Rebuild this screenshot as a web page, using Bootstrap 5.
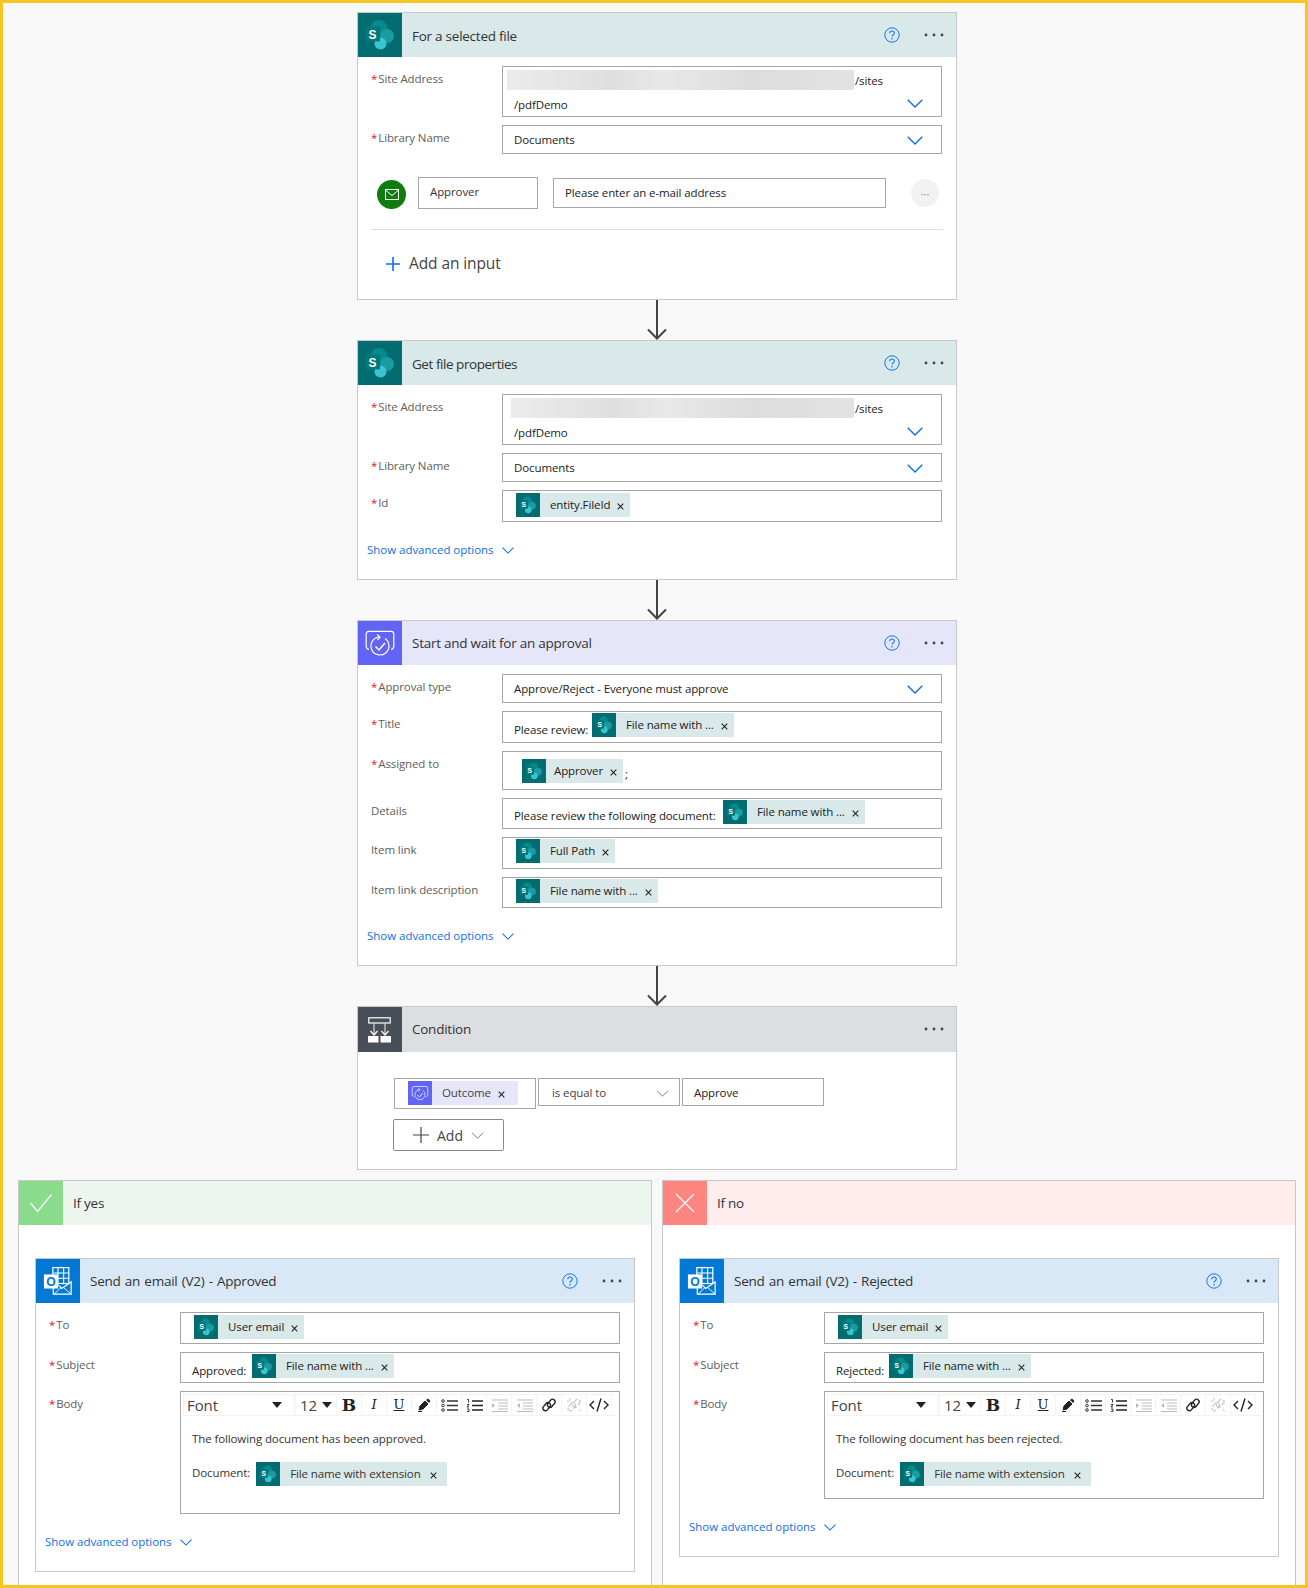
<!DOCTYPE html>
<html lang="en">
<head>
<meta charset="utf-8">
<title>Flow</title>
<link rel="stylesheet" href="https://cdn.jsdelivr.net/npm/bootstrap@5.3.0/dist/css/bootstrap.min.css">
<style>
html,body{margin:0;height:1588px;overflow:hidden}
body{font-family:"Open Sans","Liberation Sans",sans-serif;font-size:11.5px;letter-spacing:-.11px;color:#222;background:#f8f8f8}
.frame{height:1588px;border:3px solid #f5c523;overflow:hidden;padding-top:9px;display:flex;flex-direction:column}
.stack{width:600px;margin-left:354px}
.fcard{width:600px;background:#fff;border:1px solid #c8c8c8;border-radius:0}
.fhead{height:44px;padding:0;border:0;border-radius:0!important;font-size:13.5px;color:#333;letter-spacing:-.25px}
.fh45{height:45px}
.ws1{word-spacing:1px}
.tdn{margin-top:2px}
.tnr{letter-spacing:-.45px}
.ficon{width:44px;height:100%;flex:none;margin-right:10px;display:flex;align-items:center;justify-content:center}
.ficon svg{display:block}
.h-sp{background:#d9e8e8}.i-sp{background:#036c70}
.h-ap{background:#e6e6fa}.i-ap{background:#6264f5}
.h-co{background:#dddee1}.i-co{background:#484f58}
.h-ok{background:#edf6ee}.i-ok{background:#8bdb8d}
.h-no{background:#ffecec}.i-no{background:#ff8580}
.h-ol{background:#d8e8f6}.i-ol{background:#0078d4}
.tools{margin-left:auto;display:flex;align-items:center;padding-right:12px;gap:24px;margin-bottom:1px}
.tools svg{display:block}
.fbody{padding:9px 14px 0 13px;display:flex;flex-direction:column;gap:8px}
.frow{display:flex}
.flabel{width:131px;flex:none;padding-top:5px;color:#605e5c;line-height:16px;font-size:11.5px}
.flabel i{color:#e81123;font-style:normal;margin-right:1px}
.fbox{flex:1;border:1px solid #a6a6a6;position:relative;background:#fff;line-height:16px}
.fb29{height:29px}.fb31{height:31px}.fb32{height:32px}.fb39{height:39px}.fb51{height:51px}
.fpad{padding-left:11px;display:flex;align-items:center}
.chev{position:absolute;right:18px;bottom:8px}
.blob{position:absolute;top:3px;height:20px;right:87px;background:linear-gradient(90deg,#ececec,#dfdfdf 30%,#e8e8e8 45%,#dddddd 70%,#e2e2e2)}
.b1{left:4px}.b2{left:8px}
.sites{position:absolute;left:352px;top:6px}
.pdf{position:absolute;left:11px;top:30px}
.chip{display:inline-flex;align-items:center;height:24px;line-height:24px;white-space:nowrap;background:#d9e8e8}
.chip>b{width:24px;height:24px;flex:none;background:#036c70;display:flex;align-items:center;justify-content:center;margin-right:10px}
.chip-a{background:#e6e6fa}.chip-a>b{background:#6264f5}
.chip svg.x{margin-left:7px;margin-right:6px;margin-top:2px}
.chipat{position:absolute}
.ftxt{position:absolute;left:11px}
.adv{display:flex;align-items:center;gap:8px;color:#0f6fe6;height:16px;margin:12px 0 21px -4px;text-decoration:none;letter-spacing:-.03px}
.arrow{height:40px;display:flex;justify-content:center}
.apr-row{display:flex;align-items:flex-start;margin-top:15px;padding-bottom:20px;border-bottom:1px solid #ddd;margin-right:-1px;position:relative;height:53px}
.disc{width:29px;height:29px;border-radius:50%;background:#107c10;display:flex;align-items:center;justify-content:center;margin-left:6px;margin-top:3px}
.tbox{border:1px solid #a6a6a6;padding-left:11px;line-height:28px}
.t-a{width:120px;height:32px;margin-left:12px;color:#333}
.t-b{width:333px;height:30px;margin-left:15px;margin-top:1px}
.more{width:28px;height:28px;border-radius:50%;background:#f2f2f2;margin-left:25px;margin-top:2px;display:flex;align-items:center;justify-content:center;color:#888;font-size:11px;line-height:1}
.addin{display:flex;align-items:center;gap:9px;font-size:15.5px;color:#444;height:33px;margin:9px 0 19px 15px;letter-spacing:-.1px}
.cond{padding:26px 0 18px 36px}
.sel-r{display:flex;gap:2px;align-items:flex-start}
.cbox{width:142px;height:28px;border:1px solid #a6a6a6;position:relative;padding-left:13px;line-height:27px;color:#444}
.c-tall{height:31px;padding:2px 0 0 13px;line-height:24px}
.c-ap{padding-left:11px;color:#222}
.c-chev{position:absolute;right:10px;top:11px}
.addbtn{width:111px;height:32px;margin:10px 0 0 -1px;border:1px solid #8a8a8a;border-radius:2px;display:flex;align-items:center;justify-content:center;gap:8px;font-size:14px;color:#444;background:#fff;padding:0}
.branches{display:flex;gap:10px;margin:10px 0 0 15px;flex:1;min-height:0}
.branch{width:634px;background:#fff;border:1px solid #c8c8c8;border-bottom:0}
.bpad{padding:33px 16px 0}
.tb{position:absolute;left:3px;top:3px;right:2px;height:21px;display:flex;gap:1px;border-bottom:1px solid #f0f0f0}
.tsel{height:20px;display:flex;align-items:center;justify-content:space-between;color:#444;font-size:15px;box-shadow:0 0 0 1px #f3f3f3}
.tsel-f{width:109px;padding:0 11px 0 3px}.tsel-n{width:40px;padding:0 4px 0 4px;margin-left:2px}
.tbn{width:24px;height:20px;display:flex;align-items:center;justify-content:center;color:#222;box-shadow:0 0 0 1px #f3f3f3}
.tbn svg{display:block}
.tbn-off{color:#c4c4c4}
.tf{font-family:"DejaVu Serif",serif;font-size:13px;line-height:20px}
.tf b{font-size:17px}
.rte1{position:absolute;left:11px;top:39px;color:#333}
.rte2{position:absolute;left:11px;top:70px;display:flex;align-items:flex-start;gap:6px;color:#333}
.rte2>span:first-child{padding-top:3px}
.rtebig{height:123px}.rtesm{height:108px}
</style>
</head>
<body>
<svg width="0" height="0" class="position-absolute">
<defs>
<symbol id="sp" viewBox="0 0 32 32"><circle cx="15" cy="9.5" r="8.5" fill="#058a8d"/><circle cx="23" cy="17" r="7" fill="#1a9ba1"/><circle cx="16.5" cy="24.5" r="6" fill="#37c6d0"/><rect x="1" y="7.5" width="15" height="15" rx="1.2" fill="#03787c"/><text x="8.5" y="19.5" text-anchor="middle" font-family="Liberation Sans" font-weight="700" font-size="12" letter-spacing="0" fill="#fff">S</text></symbol>
<symbol id="ap" viewBox="0 0 32 32" fill="none" stroke="#fff" stroke-width="1.2"><path d="M5 22.5C3 22 2.2 21 2.2 19V7c0-1.6 1-2.6 2.6-2.6h22.4c1.6 0 2.6 1 2.6 2.6v12c0 2-.8 3-2.8 3.5"/><path d="M21 11.5a9 9 0 1 1-6-1.5"/><path d="M13 7.5 16 10l-2.5 3"/><path d="m11.5 19.5 3.5 3.5 6-7" stroke-width="1.5"/></symbol>
<symbol id="co" viewBox="0 0 24 28" fill="none"><rect x=".8" y="1.8" width="21.4" height="5.2" stroke="#fff" stroke-width="1.2"/><path d="M6 7v12M17 7v12" stroke="#d4d4d4" stroke-width="1.2"/><path d="m2.5 15 3.5 4 3.5-4M13.500 15l3.500 4 3.500-4" stroke="#fff" stroke-width="1.2"/><rect x="0" y="20" width="10.500" height="6.500" fill="#fff"/><rect x="12.500" y="20" width="10.500" height="6.500" fill="#fff"/></symbol>
<symbol id="ol" viewBox="0 0 32 32"><rect x="10.500" y="1.700" width="17" height="17" fill="none" stroke="#fff" stroke-width="1.300"/><path d="M16 2v16M22 2v16M11 7.500h17M11 13h17" stroke="#fff" stroke-width="1.200"/><path d="M13 17.500 20 24l10-7v13H11V21" fill="#0078d4" stroke="#fff" stroke-width="1.300"/><path d="m12 30 7.500-7.500M30 30l-8-7" stroke="#fff"/><rect x="1" y="9" width="15" height="15" fill="#fff"/><text x="8.500" y="21" text-anchor="middle" font-family="Liberation Sans" font-weight="700" font-size="13" fill="#0078d4">O</text></symbol>
<symbol id="help" viewBox="0 0 16 16"><circle cx="8" cy="8" r="7.200" fill="none" stroke="#1478f0"/><path d="M5.700 6.200C5.800 4.800 6.800 4 8 4c1.400 0 2.300.9 2.300 2 0 1.900-2.300 1.700-2.300 3.800" fill="none" stroke="#1478f0" stroke-width="1.100"/><circle cx="8" cy="11.800" r=".8" fill="#1478f0"/></symbol>
<symbol id="dn" viewBox="0 0 16 9"><path d="m.7.700 7.300 7.300 7.300-7.300" fill="none" stroke="#0f6fe6" stroke-width="1.400"/></symbol>
<symbol id="gd" viewBox="0 0 16 9"><path d="m1 1 7 7 7-7" fill="none" stroke="#666" stroke-width="1.100"/></symbol>
<symbol id="xx" viewBox="0 0 8 8"><path d="m.8.800 6.400 6.400m0-6.400L.8 7.200" stroke="#222" stroke-width="1.200"/></symbol>
<symbol id="dots" viewBox="0 0 20 4"><circle cx="2" cy="2" r="1.400" fill="#444"/><circle cx="10" cy="2" r="1.400" fill="#444"/><circle cx="18" cy="2" r="1.400" fill="#444"/></symbol>
<symbol id="arw" viewBox="0 0 22 40"><path d="M11 0v38.500M2 29.500l9 9 9-9" fill="none" stroke="#444" stroke-width="2"/></symbol>
<symbol id="lnk" viewBox="0 0 16 16"><g fill="none" stroke-width="1.400" stroke="currentColor"><rect x="1.200" y="7.200" width="9" height="5" rx="2.500" transform="rotate(-50 5.700 9.700)"/><rect x="5.800" y="3.800" width="9" height="5" rx="2.500" transform="rotate(-50 10.300 6.300)"/></g></symbol>
<symbol id="unl" viewBox="0 0 16 16"><g fill="none" stroke-width="1.200" stroke="currentColor"><rect x="1.200" y="7.200" width="9" height="5" rx="2.500" transform="rotate(-50 5.700 9.700)" stroke-dasharray="6 2"/><rect x="5.800" y="3.800" width="9" height="5" rx="2.500" transform="rotate(-50 10.300 6.300)" stroke-dasharray="6 2"/><path d="M4 1v2.500M1 4h2.500M12.500 12l2.500 2.500" stroke-width="1"/></g></symbol>
<symbol id="mrk" viewBox="0 0 14 14"><path d="M1 13.500h4M2 12l1-4 5-5 3 3-5 5z" fill="#222" stroke="#222"/><path d="m9 2 2-1.500 2.500 2.500L12 5z" fill="#222"/></symbol>
<symbol id="ul" viewBox="0 0 17 13" fill="none" stroke="#333"><circle cx="2" cy="2" r="1.300"/><circle cx="2" cy="6.500" r="1.300"/><circle cx="2" cy="11" r="1.300"/><path d="M6 2h11M6 6.500h11M6 11h11" stroke-width="1.300"/></symbol>
<symbol id="olst" viewBox="0 0 17 13" fill="none" stroke="#222"><path d="M1 .5h1.500v3M1 5.500h2L1 8h2M1 10h2v2.500H1" stroke-width=".9"/><path d="M6 2h11M6 6.500h11M6 11h11" stroke-width="1.300"/></symbol>
<symbol id="ind" viewBox="0 0 17 13" fill="none" stroke="#bbb"><path d="M1 1h16M7 4h10M7 7h10M7 10h10M1 12.500h16"/><path d="m1 4 3 2.500L1 9z" fill="#bbb" stroke="none"/></symbol>
<symbol id="oud" viewBox="0 0 17 13" fill="none" stroke="#bbb"><path d="M1 1h16M7 4h10M7 7h10M7 10h10M1 12.500h16"/><path d="M4 4 1 6.500 4 9z" fill="#bbb" stroke="none"/></symbol>
<symbol id="cod" viewBox="0 0 20 14" fill="none" stroke="#222" stroke-width="1.400"><path d="M5 3 1 7l4 4M15 3l4 4-4 4M12 .5 8 13.500"/></symbol>
</defs>
</svg>
<div class="frame">
<div class="stack">

<div class="card fcard">
  <div class="card-header fhead h-sp d-flex align-items-center"><div class="ficon i-sp"><svg width="32" height="32"><use href="#sp"/></svg></div><span class="tdn">For a selected file</span><div class="tools"><svg width="16" height="16"><use href="#help"/></svg><svg width="20" height="4"><use href="#dots"/></svg></div></div>
  <div class="fbody">
    <div class="frow"><div class="flabel"><i>*</i>Site Address</div><div class="fbox fb51"><div class="blob b1"></div><span class="sites">/sites</span><span class="pdf">/pdfDemo</span><svg class="chev" width="16" height="9"><use href="#dn"/></svg></div></div>
    <div class="frow"><div class="flabel"><i>*</i>Library Name</div><div class="fbox fb29 fpad">Documents<svg class="chev" width="16" height="9"><use href="#dn"/></svg></div></div>
    <div class="apr-row"><div class="disc"><svg width="14" height="11" viewBox="0 0 14 11" fill="none" stroke="#fff"><rect x=".5" y=".5" width="13" height="10"/><path d="m1 1.500 6 5 6-5"/></svg></div><div class="tbox t-a">Approver</div><div class="tbox t-b">Please enter an e-mail address</div><div class="more">···</div></div>
    <div class="addin"><svg width="14" height="14" viewBox="0 0 14 14"><path d="M7 0v14M0 7h14" stroke="#0f6fe6" stroke-width="1.600"/></svg><span>Add an input</span></div>
  </div>
</div>
<div class="arrow"><svg width="22" height="40"><use href="#arw"/></svg></div>

<div class="card fcard">
  <div class="card-header fhead h-sp d-flex align-items-center"><div class="ficon i-sp"><svg width="32" height="32"><use href="#sp"/></svg></div><span class="tdn tnr">Get file properties</span><div class="tools"><svg width="16" height="16"><use href="#help"/></svg><svg width="20" height="4"><use href="#dots"/></svg></div></div>
  <div class="fbody">
    <div class="frow"><div class="flabel"><i>*</i>Site Address</div><div class="fbox fb51"><div class="blob b2"></div><span class="sites">/sites</span><span class="pdf">/pdfDemo</span><svg class="chev" width="16" height="9"><use href="#dn"/></svg></div></div>
    <div class="frow"><div class="flabel"><i>*</i>Library Name</div><div class="fbox fb29 fpad">Documents<svg class="chev" width="16" height="9"><use href="#dn"/></svg></div></div>
    <div class="frow"><div class="flabel"><i>*</i>Id</div><div class="fbox fb32"><span class="chip chipat" style="left:13px;top:2px"><b><svg width="18" height="18"><use href="#sp"/></svg></b>entity.FileId<svg class="x" width="7" height="7"><use href="#xx"/></svg></span></div></div>
    <a class="adv" href="#">Show advanced options<svg width="12" height="7"><use href="#dn"/></svg></a>
  </div>
</div>
<div class="arrow"><svg width="22" height="40"><use href="#arw"/></svg></div>

<div class="card fcard">
  <div class="card-header fhead h-ap d-flex align-items-center"><div class="ficon i-ap"><svg width="32" height="32"><use href="#ap"/></svg></div><span>Start and wait for an approval</span><div class="tools"><svg width="16" height="16"><use href="#help"/></svg><svg width="20" height="4"><use href="#dots"/></svg></div></div>
  <div class="fbody">
    <div class="frow"><div class="flabel"><i>*</i>Approval type</div><div class="fbox fb29 fpad">Approve/Reject - Everyone must approve<svg class="chev" width="16" height="9"><use href="#dn"/></svg></div></div>
    <div class="frow"><div class="flabel"><i>*</i>Title</div><div class="fbox fb32"><span class="ftxt" style="top:10px">Please review:</span><span class="chip chipat" style="left:89px;top:1px"><b><svg width="18" height="18"><use href="#sp"/></svg></b>File name with ...<svg class="x" width="7" height="7"><use href="#xx"/></svg></span></div></div>
    <div class="frow"><div class="flabel"><i>*</i>Assigned to</div><div class="fbox fb39"><span class="chip chipat" style="left:19px;top:7px"><b style="margin-right:8px"><svg width="18" height="18"><use href="#sp"/></svg></b>Approver<svg class="x" width="7" height="7"><use href="#xx"/></svg></span><span class="ftxt" style="left:122px;top:14px">;</span></div></div>
    <div class="frow"><div class="flabel">Details</div><div class="fbox fb31"><span class="ftxt" style="top:9px">Please review the following document:</span><span class="chip chipat" style="left:220px;top:1px"><b><svg width="18" height="18"><use href="#sp"/></svg></b>File name with ...<svg class="x" width="7" height="7"><use href="#xx"/></svg></span></div></div>
    <div class="frow"><div class="flabel">Item link</div><div class="fbox fb32"><span class="chip chipat" style="left:13px;top:1px"><b><svg width="18" height="18"><use href="#sp"/></svg></b>Full Path<svg class="x" width="7" height="7"><use href="#xx"/></svg></span></div></div>
    <div class="frow"><div class="flabel">Item link description</div><div class="fbox fb31"><span class="chip chipat" style="left:13px;top:1px"><b><svg width="18" height="18"><use href="#sp"/></svg></b>File name with ...<svg class="x" width="7" height="7"><use href="#xx"/></svg></span></div></div>
    <a class="adv" href="#">Show advanced options<svg width="12" height="7"><use href="#dn"/></svg></a>
  </div>
</div>
<div class="arrow"><svg width="22" height="40"><use href="#arw"/></svg></div>

<div class="card fcard">
  <div class="card-header fhead fh45 h-co d-flex align-items-center"><div class="ficon i-co"><svg width="24" height="28"><use href="#co"/></svg></div><span>Condition</span><div class="tools"><svg width="20" height="4"><use href="#dots"/></svg></div></div>
  <div class="cond">
    <div class="sel-r">
      <div class="cbox c-tall"><span class="chip chip-a"><b><svg width="18" height="18"><use href="#ap"/></svg></b>Outcome<svg class="x" width="7" height="7" style="margin-right:13px"><use href="#xx"/></svg></span></div>
      <div class="cbox">is equal to<svg class="c-chev" width="13" height="7"><use href="#gd"/></svg></div>
      <div class="cbox c-ap">Approve</div>
    </div>
    <button type="button" class="btn addbtn"><svg width="16" height="16" viewBox="0 0 16 16"><path d="M8 0v16M0 8h16" stroke="#444" stroke-width="1.200"/></svg><span>Add</span><svg width="13" height="7"><use href="#gd"/></svg></button>
  </div>
</div>

</div>

<div class="branches">
  <div class="branch">
    <div class="fhead h-ok d-flex align-items-center"><div class="ficon i-ok"><svg width="24" height="20" viewBox="0 0 24 20"><path d="m1.500 10 7 8.500L22.500 1.500" fill="none" stroke="#fff" stroke-width="1.300"/></svg></div><span>If yes</span></div>
    <div class="bpad">
      <div class="card fcard">
        <div class="card-header fhead h-ol d-flex align-items-center"><div class="ficon i-ol"><svg width="30" height="30"><use href="#ol"/></svg></div><span class="ws1">Send an email (V2) - Approved</span><div class="tools"><svg width="16" height="16"><use href="#help"/></svg><svg width="20" height="4"><use href="#dots"/></svg></div></div>
        <div class="fbody">
          <div class="frow"><div class="flabel"><i>*</i>To</div><div class="fbox fb32"><span class="chip chipat" style="left:13px;top:2px"><b><svg width="18" height="18"><use href="#sp"/></svg></b>User email<svg class="x" width="7" height="7"><use href="#xx"/></svg></span></div></div>
          <div class="frow"><div class="flabel"><i>*</i>Subject</div><div class="fbox fb31"><span class="ftxt" style="top:10px">Approved:</span><span class="chip chipat" style="left:71px;top:1px"><b><svg width="18" height="18"><use href="#sp"/></svg></b>File name with ...<svg class="x" width="7" height="7"><use href="#xx"/></svg></span></div></div>
          <div class="frow"><div class="flabel"><i>*</i>Body</div><div class="fbox rtebig">
            <div class="tb"><div class="tsel tsel-f"><span>Font</span><svg width="10" height="6"><path d="M0 0h10L5 6z" fill="#222"/></svg></div><div class="tsel tsel-n"><span>12</span><svg width="10" height="6"><path d="M0 0h10L5 6z" fill="#222"/></svg></div><div class="tbn tf"><b>B</b></div><div class="tbn tf"><i>I</i></div><div class="tbn tf"><u>U</u></div><div class="tbn"><svg width="14" height="14"><use href="#mrk"/></svg></div><div class="tbn"><svg width="17" height="13"><use href="#ul"/></svg></div><div class="tbn"><svg width="17" height="13"><use href="#olst"/></svg></div><div class="tbn"><svg width="17" height="13"><use href="#ind"/></svg></div><div class="tbn"><svg width="17" height="13"><use href="#oud"/></svg></div><div class="tbn"><svg width="16" height="16"><use href="#lnk"/></svg></div><div class="tbn tbn-off"><svg width="16" height="16"><use href="#unl"/></svg></div><div class="tbn"><svg width="20" height="14"><use href="#cod"/></svg></div></div>
            <div class="rte1">The following document has been approved.</div>
            <div class="rte2"><span>Document:</span><span class="chip"><b><svg width="18" height="18"><use href="#sp"/></svg></b>File name with extension<svg class="x" width="7" height="7" style="margin-left:9px;margin-right:10px"><use href="#xx"/></svg></span></div>
          </div></div>
          <a class="adv" href="#">Show advanced options<svg width="12" height="7"><use href="#dn"/></svg></a>
        </div>
      </div>
    </div>
  </div>
  <div class="branch">
    <div class="fhead h-no d-flex align-items-center"><div class="ficon i-no"><svg width="20" height="20" viewBox="0 0 20 20"><path d="m1 1 18 18M19 1 1 19" fill="none" stroke="#fff" stroke-width="1.200"/></svg></div><span>If no</span></div>
    <div class="bpad">
      <div class="card fcard">
        <div class="card-header fhead h-ol d-flex align-items-center"><div class="ficon i-ol"><svg width="30" height="30"><use href="#ol"/></svg></div><span class="ws1">Send an email (V2) - Rejected</span><div class="tools"><svg width="16" height="16"><use href="#help"/></svg><svg width="20" height="4"><use href="#dots"/></svg></div></div>
        <div class="fbody">
          <div class="frow"><div class="flabel"><i>*</i>To</div><div class="fbox fb32"><span class="chip chipat" style="left:13px;top:2px"><b><svg width="18" height="18"><use href="#sp"/></svg></b>User email<svg class="x" width="7" height="7"><use href="#xx"/></svg></span></div></div>
          <div class="frow"><div class="flabel"><i>*</i>Subject</div><div class="fbox fb31"><span class="ftxt" style="top:10px">Rejected:</span><span class="chip chipat" style="left:64px;top:1px"><b><svg width="18" height="18"><use href="#sp"/></svg></b>File name with ...<svg class="x" width="7" height="7"><use href="#xx"/></svg></span></div></div>
          <div class="frow"><div class="flabel"><i>*</i>Body</div><div class="fbox rtesm">
            <div class="tb"><div class="tsel tsel-f"><span>Font</span><svg width="10" height="6"><path d="M0 0h10L5 6z" fill="#222"/></svg></div><div class="tsel tsel-n"><span>12</span><svg width="10" height="6"><path d="M0 0h10L5 6z" fill="#222"/></svg></div><div class="tbn tf"><b>B</b></div><div class="tbn tf"><i>I</i></div><div class="tbn tf"><u>U</u></div><div class="tbn"><svg width="14" height="14"><use href="#mrk"/></svg></div><div class="tbn"><svg width="17" height="13"><use href="#ul"/></svg></div><div class="tbn"><svg width="17" height="13"><use href="#olst"/></svg></div><div class="tbn"><svg width="17" height="13"><use href="#ind"/></svg></div><div class="tbn"><svg width="17" height="13"><use href="#oud"/></svg></div><div class="tbn"><svg width="16" height="16"><use href="#lnk"/></svg></div><div class="tbn tbn-off"><svg width="16" height="16"><use href="#unl"/></svg></div><div class="tbn"><svg width="20" height="14"><use href="#cod"/></svg></div></div>
            <div class="rte1">The following document has been rejected.</div>
            <div class="rte2"><span>Document:</span><span class="chip"><b><svg width="18" height="18"><use href="#sp"/></svg></b>File name with extension<svg class="x" width="7" height="7" style="margin-left:9px;margin-right:10px"><use href="#xx"/></svg></span></div>
          </div></div>
          <a class="adv" href="#">Show advanced options<svg width="12" height="7"><use href="#dn"/></svg></a>
        </div>
      </div>
    </div>
  </div>
</div>
</div>
<script src="https://cdn.jsdelivr.net/npm/bootstrap@5.3.0/dist/js/bootstrap.bundle.min.js"></script>
</body>
</html>
